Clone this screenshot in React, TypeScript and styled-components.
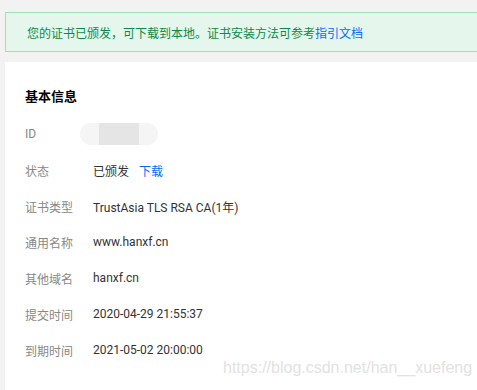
import styled, { createGlobalStyle } from 'styled-components';

const GlobalStyle = createGlobalStyle`
  html, body {
    margin: 0;
    padding: 0;
    background: #f2f2f2;
    font-family: "Roboto", "Noto Sans CJK SC", sans-serif;
    overflow: hidden;
  }
`;

const rows = [
  { label: '证书类型', value: 'TrustAsia TLS RSA CA(1年)' },
  { label: '通用名称', value: 'www.hanxf.cn' },
  { label: '其他域名', value: 'hanxf.cn' },
  { label: '提交时间', value: '2020-04-29 21:55:37' },
  { label: '到期时间', value: '2021-05-02 20:00:00' },
];

function App() {
  return (
    <>
      <GlobalStyle />
      <Page>
        <Alert>
          您的证书已颁发，可下载到本地。证书安装方法可参考<Link>指引文档</Link>
        </Alert>
        <Card>
          <Title>基本信息</Title>
          <List>
            <Row>
              <Label>ID</Label>
              <Value>
                <Blur>
                  <BlurCore />
                </Blur>
              </Value>
            </Row>
            <Row>
              <Label>状态</Label>
              <Value>
                已颁发<Link $gap>下载</Link>
              </Value>
            </Row>
            {rows.map((r) => (
              <Row key={r.label}>
                <Label>{r.label}</Label>
                <Value>{r.value}</Value>
              </Row>
            ))}
          </List>
          <Watermark>https://blog.csdn.net/han__xuefeng</Watermark>
        </Card>
      </Page>
    </>
  );
}

//*STYLES
const Page = styled.div`
  width: 490px;
  height: 390px;
  padding: 12px 0 0 5px;
  box-sizing: border-box;
  display: flex;
  flex-direction: column;
  gap: 10px;
`;

const Alert = styled.div`
  height: 40px;
  box-sizing: border-box;
  display: flex;
  align-items: center;
  padding-left: 21px;
  background: #e5f6ec;
  border: 1px solid #9ee0b6;
  color: #0b8b4b;
  font-size: 12px;
`;

const Link = styled.span<{ $gap?: boolean }>`
  color: #006eff;
  margin-left: ${(p) => (p.$gap ? '10px' : '0')};
`;

const Card = styled.div`
  flex: 1;
  position: relative;
  background: #fff;
  padding: 25px 20px 0 20px;
`;

const Title = styled.div`
  font-size: 13px;
  font-weight: bold;
  color: #000;
  line-height: 20px;
`;

const List = styled.div`
  display: flex;
  flex-direction: column;
  margin-top: 9px;
`;

const Row = styled.div`
  display: flex;
  align-items: center;
  height: 36px;
  font-size: 12px;
`;

const Label = styled.div`
  width: 68px;
  color: #888;
`;

const Value = styled.div`
  color: #333;
  display: flex;
  align-items: center;
`;

const Blur = styled.div`
  width: 78px;
  height: 22px;
  margin-left: -13px;
  border-radius: 11px;
  background: #f5f5f6;
  display: flex;
  justify-content: center;
`;

const BlurCore = styled.div`
  width: 40px;
  height: 100%;
  background: #e6e5e5;
`;

const Watermark = styled.div`
  position: absolute;
  left: 218px;
  top: 297px;
  font-size: 16px;
  color: #e2e2e2;
  font-family: "Liberation Sans", Arial, sans-serif;
  white-space: nowrap;
`;

export default App;
